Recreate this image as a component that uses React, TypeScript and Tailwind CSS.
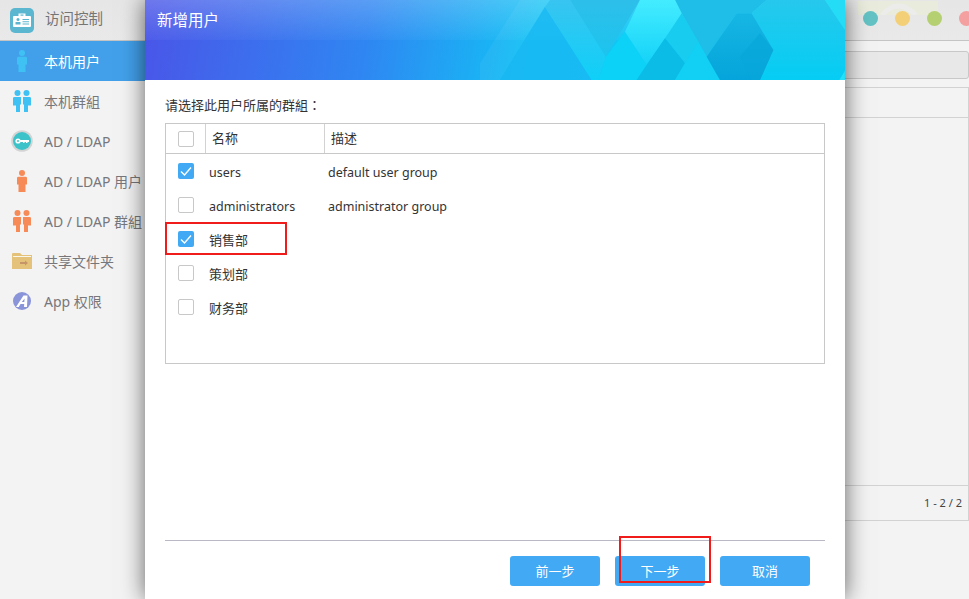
import React from "react";

const font = { fontFamily: '"Noto Sans", "Noto Sans CJK SC", sans-serif' };

function Person({ color }: { color: string }) {
  return (
    <svg width="10" height="22" viewBox="0 0 10 22">
      <circle cx="5" cy="3" r="3" fill={color} />
      <path d="M0 8 Q0 6.8 1.5 6.8 H8.5 Q10 6.8 10 8 V14.5 H8.5 V22 H1.5 V14.5 H0 Z" fill={color} />
    </svg>
  );
}

function People({ color }: { color: string }) {
  return (
    <svg width="18" height="22" viewBox="0 0 18 22">
      <circle cx="4.5" cy="3" r="3" fill={color} />
      <circle cx="13.5" cy="3" r="3" fill={color} />
      <path d="M0 8.2 Q0 7 1.5 7 H8 V14 L7 15 V22 H3 V15.5 H0 Z" fill={color} />
      <path d="M18 8.2 Q18 7 16.5 7 H10 V14 L11 15 V22 H15 V15.5 H18 Z" fill={color} />
    </svg>
  );
}

function KeyIcon() {
  return (
    <svg width="22" height="22" viewBox="0 0 22 22">
      <circle cx="11" cy="11" r="10.8" fill="#d4d4d4" />
      <circle cx="11" cy="11" r="9" fill="#3cc3c9" />
      <circle cx="7" cy="11" r="2.6" fill="#fff" />
      <circle cx="7" cy="11" r="1" fill="#3cc3c9" />
      <path d="M9 10 H18 V12 H16.5 V13 H15 V12 H13.5 V13 H12 V12 H9 Z" fill="#fff" />
    </svg>
  );
}

function FolderIcon() {
  return (
    <svg width="20" height="16" viewBox="0 0 20 16">
      <path d="M0 1 Q0 0 1 0 H8 L10 2 H20 V16 H0 Z" fill="#e5c27a" />
      <path d="M1 3 H19 V4 H1 Z" fill="#fff" opacity="0.85" />
      <path d="M8 9 H13 V7.5 L16 10 L13 12.5 V11 H8 Z" fill="#c59468" />
    </svg>
  );
}

function AppIcon() {
  return (
    <svg width="18" height="18" viewBox="0 0 18 18">
      <circle cx="9" cy="9" r="9" fill="#8a94d8" />
      <path d="M3 15 L10.5 3.5 H14.5 L14 15 H11 L11.2 12 H7.5 L5.8 15 Z M8.8 10 H11.3 L11.6 6.5 Z" fill="#fff" fillRule="evenodd" />
    </svg>
  );
}

function CardIcon() {
  return (
    <svg width="24" height="25" viewBox="0 0 24 25">
      <rect width="24" height="25" rx="5" fill="#5bb6d0" />
      <path d="M8.5 5.5 H15.5 V8 H20 Q21 8 21 9 V18 Q21 19 20 19 H4 Q3 19 3 18 V9 Q3 8 4 8 H8.5 Z" fill="#fff" />
      <rect x="10.5" y="6.5" width="3" height="1.2" fill="#5bb6d0" />
      <circle cx="8" cy="11.5" r="1.5" fill="#5bb6d0" />
      <path d="M5.5 16.5 V14.5 Q5.5 14 6 14 H10 Q10.5 14 10.5 14.5 V16.5 Z" fill="#5bb6d0" />
      <path d="M12.5 11 H19 V12 H12.5 Z M12.5 13.3 H19 V14.3 H12.5 Z M12.5 15.6 H19 V16.6 H12.5 Z" fill="#5bb6d0" />
    </svg>
  );
}

const navItems: { label: string; icon: React.ReactNode; active?: boolean }[] = [
  { label: "本机用户", icon: <Person color="#3fc1f4" />, active: true },
  { label: "本机群組", icon: <People color="#3fc1f4" /> },
  { label: "AD / LDAP", icon: <KeyIcon /> },
  { label: "AD / LDAP 用户", icon: <Person color="#f68b58" /> },
  { label: "AD / LDAP 群組", icon: <People color="#f68b58" /> },
  { label: "共享文件夹", icon: <FolderIcon /> },
  { label: "App 权限", icon: <AppIcon /> },
];

function Check({ checked }: { checked?: boolean }) {
  return checked ? (
    <span className="flex h-4 w-4 items-center justify-center rounded-[2px] bg-[#42a9f4]">
      <svg width="16" height="16" viewBox="0 0 16 16">
        <path d="M3 8.5 L6.5 12 L13 4.5" fill="none" stroke="#fff" strokeWidth="1.4" />
      </svg>
    </span>
  ) : (
    <span className="block h-4 w-4 rounded-[2px] border border-[#c8c8c8] bg-white" />
  );
}

const rows: { name: string; desc: string; checked?: boolean; latin?: boolean }[] = [
  { name: "users", desc: "default user group", checked: true, latin: true },
  { name: "administrators", desc: "administrator group", latin: true },
  { name: "销售部", desc: "", checked: true },
  { name: "策划部", desc: "" },
  { name: "财务部", desc: "" },
];

function HeaderArt() {
  return (
    <svg className="absolute inset-0" width="700" height="80" viewBox="0 0 700 80">
      <defs>
        <linearGradient id="bright" x1="0" y1="0" x2="0" y2="1">
          <stop offset="0" stopColor="#44ecff" />
          <stop offset="1" stopColor="#14d2f8" />
        </linearGradient>
        <linearGradient id="dark" x1="0" y1="0" x2="0" y2="1">
          <stop offset="0" stopColor="#16b6e4" />
          <stop offset="1" stopColor="#05a4da" />
        </linearGradient>
        <linearGradient id="right" x1="0" y1="0" x2="0" y2="1">
          <stop offset="0" stopColor="#26c8ec" />
          <stop offset="1" stopColor="#05cdf4" />
        </linearGradient>
        <linearGradient id="centre" x1="0" y1="0" x2="0" y2="1">
          <stop offset="0" stopColor="#2dbfea" />
          <stop offset="1" stopColor="#1cc4ee" />
        </linearGradient>
        <linearGradient id="band" x1="0" y1="0" x2="0" y2="1">
          <stop offset="0" stopColor="#38c4f0" />
          <stop offset="1" stopColor="#0fd0f8" />
        </linearGradient>
      </defs>
      <g transform="translate(335 0) scale(0.3333)">
        <polygon points="120,0 270,0 195,20 60,240 0,240 0,190" fill="#ffffff" opacity="0.05" />
        <polygon points="195,20 335,240 60,240" fill="#1ab8f3" opacity="0.8" />
        <polygon points="195,20 210,0 270,0 378,170 355,240 335,240" fill="url(#band)" />
        <polygon points="270,0 480,0 378,170" fill="url(#centre)" />
        <polygon points="378,170 435,95 500,195 470,240 355,240" fill="#0cd2f8" />
        <polygon points="585,0 860,0 815,40 770,40 680,170 605,40" fill="#1fbee8" />
        <polygon points="605,40 655,125 615,190 555,115" fill="#18ccf0" />
        <polygon points="480,0 585,0 605,40 555,115 500,195 435,95" fill="url(#bright)" />
        <polygon points="500,195 555,115 615,190 585,240 470,240" fill="#0abce6" />
        <polygon points="615,190 655,125 680,170 720,240 585,240" fill="#12d0f4" />
        <polygon points="815,40 860,0 1035,0 1095,90 1095,240 840,240 880,150" fill="url(#right)" />
        <polygon points="680,170 770,40 815,40 880,150 840,240 720,240" fill="url(#dark)" />
        <polygon points="780,170 840,100 880,150 840,240 815,240" fill="#08a6da" opacity="0.7" />
        <polygon points="1035,0 1095,0 1095,90" fill="#24dcf6" />
        <polygon points="1078,240 1095,212 1095,240" fill="#24e0f8" />
      </g>
    </svg>
  );
}

export default function App() {
  return (
    <div className="relative flex h-[599px] w-[969px] flex-col overflow-hidden bg-[#f3f3f3]" style={font}>
      <div className="relative flex h-[41px] shrink-0 items-center border-b border-[#c4c4c4] bg-[linear-gradient(180deg,#e6e6e6,#e9e9e9)]">
        <svg className="absolute left-[858px] top-[1px]" width="80" height="14" viewBox="0 0 80 14">
          <rect width="80" height="14" fill="#e9ebdc" />
          <path d="M24 14 Q40 -4 58 14" fill="none" stroke="#ececea" strokeWidth="5" />
        </svg>
        <div className="relative ml-[10px] flex items-center gap-[11px]">
          <CardIcon />
          <span className="pb-[3px] text-[14.5px] text-[#757575]">访问控制</span>
        </div>
        <div className="relative ml-auto mr-[-5px] flex items-center gap-[17px] pb-[3px]">
          <span className="h-[15px] w-[15px] rounded-full bg-[#63c2c4]" />
          <span className="h-[15px] w-[15px] rounded-full bg-[#f3d077]" />
          <span className="h-[15px] w-[15px] rounded-full bg-[#b5d070]" />
          <span className="h-[15px] w-[15px] rounded-full bg-[#f4a0a0]" />
        </div>
      </div>
      <div className="flex min-h-0 flex-1">
        <nav className="w-[145px] shrink-0">
          {navItems.map((item) => (
            <div key={item.label} className={`flex h-10 items-center ${item.active ? "bg-[#42a0ea] text-white" : "text-[#77777b]"}`}>
              <div className="flex w-[44px] shrink-0 justify-center">{item.icon}</div>
              <span className="whitespace-nowrap text-[14px]">{item.label}</span>
            </div>
          ))}
        </nav>
        <div className="flex min-w-0 flex-1 flex-col pt-[10px]">
          <div className="h-[28px] shrink-0 rounded-[3px] border border-[#c8c8c8] bg-[#e8e8e8]" />
          <div className="mt-2 h-[31px] shrink-0 border-y border-r border-[#d2d2d2]" />
          <div className="flex-1 border-r border-[#d2d2d2]" />
          <div className="mb-[78px] flex h-[36px] shrink-0 items-center justify-end border-y border-r border-[#d2d2d2] pr-[6px] text-[11px] text-[#444]">
            1 - 2 / 2
          </div>
        </div>
      </div>

      <div className="absolute bottom-0 left-[145px] top-0 flex w-[700px] flex-col bg-white shadow-[0_0_22px_rgba(0,0,0,0.6)]">
        <header className="relative h-[80px] shrink-0 overflow-hidden bg-[linear-gradient(100deg,#4a55e8_0%,#2f86f2_32%,#12c3f5_56%,#0bcdf0_100%)]">
          <div className="absolute inset-x-0 top-0 h-[40px] bg-[linear-gradient(180deg,rgba(255,255,255,0.2),rgba(255,255,255,0.03))]" />
          <HeaderArt />
          <h1 className="absolute left-3 top-[9px] text-[15.5px] font-normal text-white">新增用户</h1>
        </header>
        <div className="flex min-h-0 flex-1 flex-col px-5">
          <p className="mb-[9px] mt-[16px] text-[13px] leading-[18px] text-[#333]">
            请选择此用户所属的群組<span className="font-['Noto_Sans_CJK_TC']">：</span>
          </p>
          <div className="h-[241px] border border-[#c8c8c8] text-[13px] text-[#333]">
            <div className="flex h-[30px] items-center border-b border-[#c8c8c8]">
              <div className="flex h-full w-[40px] items-center justify-center border-r border-[#d2d2d2]"><Check /></div>
              <div className="flex h-full w-[119px] items-center border-r border-[#d2d2d2] pl-[6px] pt-[1px]">名称</div>
              <div className="pl-[6px] pt-[1px]">描述</div>
            </div>
            {rows.map((r) => (
              <div key={r.name} className="flex h-[34px] items-center first:mt-[1px]">
                <div className="flex w-[40px] justify-center"><Check checked={r.checked} /></div>
                <div className={`w-[119px] pl-[3px] ${r.latin ? "pt-[4px] text-[12.5px]" : "pt-[3px] text-[13px]"}`}>{r.name}</div>
                <div className="pl-[3px] pt-[4px] text-[12.5px]">{r.desc}</div>
              </div>
            ))}
          </div>
          <div className="mt-auto border-t border-[#b9b9c6]">
            <div className="flex justify-end gap-[15px] pb-[13px] pr-[15px] pt-[15px]">
              {["前一步", "下一步", "取消"].map((b) => (
                <button key={b} className="h-[30px] w-[90px] rounded-[3px] bg-[#42a9f4] pt-[2px] text-[13px] text-white">{b}</button>
              ))}
            </div>
          </div>
        </div>
      </div>

      <div className="absolute left-[165px] top-[222px] h-[33px] w-[122px] border-2 border-[#f01b1b]" />
      <div className="absolute left-[619px] top-[536px] h-[47px] w-[92px] border-2 border-[#f01b1b]" />
    </div>
  );
}
